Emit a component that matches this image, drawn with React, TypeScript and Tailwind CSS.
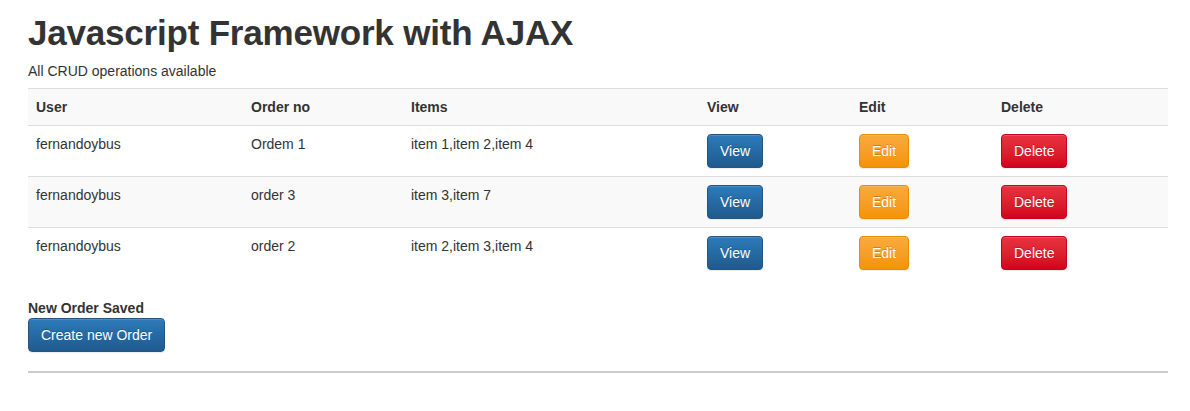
import React from 'react';

type Order = { user: string; order: string; items: string };

const orders: Order[] = [
    { user: 'fernandoybus', order: 'Ordem 1', items: 'item 1,item 2,item 4' },
    { user: 'fernandoybus', order: 'order 3', items: 'item 3,item 7' },
    { user: 'fernandoybus', order: 'order 2', items: 'item 2,item 3,item 4' },
];

const btnBase =
    'inline-block rounded-[4px] border px-3 py-[6px] text-[14px] leading-[20px] text-white [text-shadow:0_-1px_0_rgba(0,0,0,0.2)] shadow-[inset_0_1px_0_rgba(255,255,255,0.15),0_1px_1px_rgba(0,0,0,0.075)]';

const btnPrimary = `${btnBase} border-[#245580] bg-gradient-to-b from-[#2c7bbb] to-[#1f5a8d]`;
const btnWarning = `${btnBase} border-[#e88c05] bg-gradient-to-b from-[#f9aa3c] to-[#f59300]`;
const btnDanger = `${btnBase} border-[#c4031c] bg-gradient-to-b from-[#e8323f] to-[#d2001c]`;

export default function App() {
    return (
        <div className="min-h-screen bg-white text-[#333333] text-[14px] leading-[20px] font-['Liberation_Sans',Arial,sans-serif]">
            <div className="w-[1140px] ml-[28px] pt-[13px]">
                {/* Header */}
                <h1 className="text-[35px] leading-[39.6px] font-bold tracking-[-0.2px]">Javascript Framework with AJAX</h1>
                <p className="mt-[8px]">All CRUD operations available</p>

                {/* Orders table */}
                <table className="w-full mt-[7px] border-collapse text-left">
                    <tbody>
                        <tr className="bg-[#f9f9f9] border-t border-b border-[#dddddd]">
                            <th className="w-[215px] p-2 font-bold">User</th>
                            <th className="w-[160px] p-2 font-bold">Order no</th>
                            <th className="w-[296px] p-2 font-bold">Items</th>
                            <th className="w-[152px] p-2 font-bold">View</th>
                            <th className="w-[142px] p-2 font-bold">Edit</th>
                            <th className="p-2 font-bold">Delete</th>
                        </tr>
                        {orders.map((o, i) => (
                            <tr
                                key={o.order}
                                className={`${i > 0 ? 'border-t border-[#dddddd]' : ''} ${i % 2 === 1 ? 'bg-[#f9f9f9]' : 'bg-white'}`}
                            >
                                <td className="p-2 align-top">{o.user}</td>
                                <td className="p-2 align-top">{o.order}</td>
                                <td className="p-2 align-top">{o.items}</td>
                                <td className="p-2 align-top">
                                    <button className={btnPrimary}>View</button>
                                </td>
                                <td className="p-2 align-top">
                                    <button className={btnWarning}>Edit</button>
                                </td>
                                <td className="p-2 align-top">
                                    <button className={btnDanger}>Delete</button>
                                </td>
                            </tr>
                        ))}
                    </tbody>
                </table>

                {/* Footer */}
                <div className="mt-[20px] font-bold">New Order Saved</div>
                <button className={btnPrimary}>Create new Order</button>
                <div className="mt-[19px] h-[2px] bg-[#cccccc]" />
            </div>
        </div>
    );
}
